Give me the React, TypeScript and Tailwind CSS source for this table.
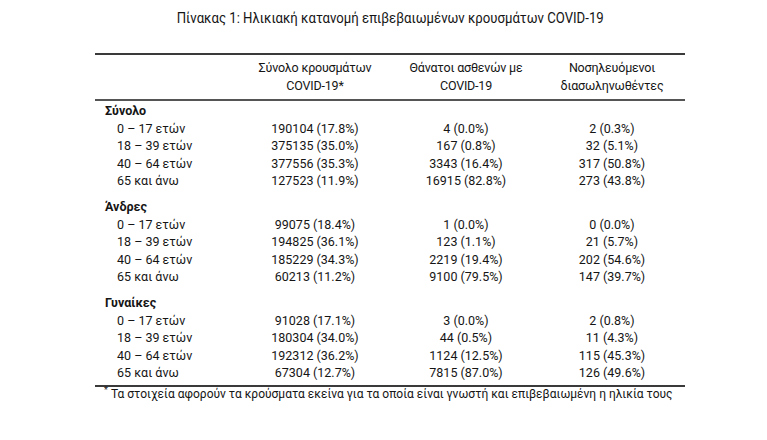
import React from "react";

type Row = { label: string; a: string; b: string; c: string };
type Group = { title: string; rows: Row[] };

const groups: Group[] = [
  {
    title: "Σύνολο",
    rows: [
      { label: "0 – 17 ετών", a: "190104 (17.8%)", b: "4 (0.0%)", c: "2 (0.3%)" },
      { label: "18 – 39 ετών", a: "375135 (35.0%)", b: "167 (0.8%)", c: "32 (5.1%)" },
      { label: "40 – 64 ετών", a: "377556 (35.3%)", b: "3343 (16.4%)", c: "317 (50.8%)" },
      { label: "65 και άνω", a: "127523 (11.9%)", b: "16915 (82.8%)", c: "273 (43.8%)" },
    ],
  },
  {
    title: "Άνδρες",
    rows: [
      { label: "0 – 17 ετών", a: "99075 (18.4%)", b: "1 (0.0%)", c: "0 (0.0%)" },
      { label: "18 – 39 ετών", a: "194825 (36.1%)", b: "123 (1.1%)", c: "21 (5.7%)" },
      { label: "40 – 64 ετών", a: "185229 (34.3%)", b: "2219 (19.4%)", c: "202 (54.6%)" },
      { label: "65 και άνω", a: "60213 (11.2%)", b: "9100 (79.5%)", c: "147 (39.7%)" },
    ],
  },
  {
    title: "Γυναίκες",
    rows: [
      { label: "0 – 17 ετών", a: "91028 (17.1%)", b: "3 (0.0%)", c: "2 (0.8%)" },
      { label: "18 – 39 ετών", a: "180304 (34.0%)", b: "44 (0.5%)", c: "11 (4.3%)" },
      { label: "40 – 64 ετών", a: "192312 (36.2%)", b: "1124 (12.5%)", c: "115 (45.3%)" },
      { label: "65 και άνω", a: "67304 (12.7%)", b: "7815 (87.0%)", c: "126 (49.6%)" },
    ],
  },
];

const gridCols = "grid grid-cols-[145px_150px_152px_140px_3px]";

export default function App() {
  return (
    <div className="w-[767px] h-[440px] bg-white text-[#151515] overflow-hidden">
      <div className="pt-[8px] h-[53px] pl-[95px] w-[685px] flex justify-center">
        <div className="font-['Roboto',sans-serif] text-[15.5px] leading-[20px] whitespace-nowrap scale-x-[0.85]">
          Πίνακας 1: Ηλικιακή κατανομή επιβεβαιωμένων κρουσμάτων COVID-19
        </div>
      </div>
      <div className="ml-[95px] w-[590px] font-['Roboto',sans-serif] text-[12.5px] leading-[17.5px]">
        <div className="h-[2px] bg-[#3a3a3a]" />
        <div className={`${gridCols} pt-[4px] pb-[5px]`}>
          <div />
          <div className="text-center tracking-[-0.2px]">
            Σύνολο κρουσμάτων
            <br />
            COVID-19*
          </div>
          <div className="text-center tracking-[-0.2px]">
            Θάνατοι ασθενών με
            <br />
            COVID-19
          </div>
          <div className="text-center tracking-[-0.2px]">
            Νοσηλευόμενοι
            <br />
            διασωληνωθέντες
          </div>
          <div />
        </div>
        <div className="h-[2px] bg-[#555]" />
        <div className="pt-[1px] pb-[3px] flex flex-col gap-[8.5px]">
          {groups.map((g) => (
            <div key={g.title} className="flex flex-col">
              <div className="pl-[10px] font-bold h-[17.5px]">{g.title}</div>
              {g.rows.map((r) => (
                <div key={r.label} className={`${gridCols} h-[17.5px]`}>
                  <div className="pl-[22px]">{r.label}</div>
                  <div className="text-center">{r.a}</div>
                  <div className="text-center">{r.b}</div>
                  <div className="text-center">{r.c}</div>
                  <div />
                </div>
              ))}
            </div>
          ))}
        </div>
        <div className="h-[2px] bg-[#3a3a3a]" />
        <div className="pl-[9px] font-['Roboto',sans-serif] text-[12px] leading-[15px] whitespace-nowrap">
          <sup className="text-[9px] mr-[3px]">*</sup>
          Τα στοιχεία αφορούν τα κρούσματα εκείνα για τα οποία είναι γνωστή και επιβεβαιωμένη η ηλικία τους
        </div>
      </div>
    </div>
  );
}
